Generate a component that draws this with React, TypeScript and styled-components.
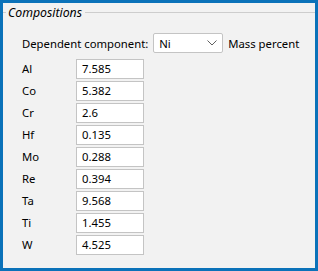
import React from 'react';
import styled, { createGlobalStyle } from 'styled-components';

const GlobalStyle = createGlobalStyle`
  html, body {
    margin: 0;
    padding: 0;
    background: #f2f2f2;
  }
  * {
    box-sizing: border-box;
  }
`;

const Window = styled.div`
  width: 318px;
  height: 271px;
  border: 3px solid #0b72b9;
  background: #f2f2f2;
  font-family: 'Noto Sans', 'Open Sans', sans-serif;
  font-size: 11.3px;
  color: #000;
  overflow: hidden;
`;

const GroupHeader = styled.div`
  display: flex;
  align-items: center;
  height: 19px;
`;

const Rule = styled.div<{ grow?: boolean; width?: number }>`
  height: 1px;
  background: #cdcdcd;
  flex: ${(p) => (p.grow ? '1' : `0 0 ${p.width}px`)};
`;

const Legend = styled.span`
  font-style: italic;
  font-size: 12.3px;
  padding: 0 3px 0 2px;
  line-height: 19px;
`;

const Body = styled.div`
  padding: 11px 0 0 19px;
  display: flex;
  flex-direction: column;
`;

const DependentRow = styled.div`
  display: flex;
  align-items: center;
  height: 20px;
  margin-bottom: 6px;
`;

const Combo = styled.div`
  width: 70px;
  height: 20px;
  margin: 0 5px 0 5px;
  border: 1px solid #c4c4c4;
  border-radius: 2px;
  background: #fff;
  display: flex;
  align-items: center;
  justify-content: space-between;
  padding: 0 5px 0 5px;
`;

const Rows = styled.div`
  display: grid;
  grid-template-columns: 54px 68px;
  row-gap: 2px;
  align-items: center;
`;

const Label = styled.span`
  line-height: 20px;
`;

const Field = styled.div`
  height: 20px;
  border: 1px solid #c4c4c4;
  background: #fff;
  padding-left: 5px;
  line-height: 18px;
`;

const Chevron = () => (
  <svg width="10" height="6" viewBox="0 0 10 6">
    <path d="M0.5 0.5 L5 5 L9.5 0.5" fill="none" stroke="#606060" strokeWidth="1" />
  </svg>
);

const composition: [string, string][] = [
  ['Al', '7.585'],
  ['Co', '5.382'],
  ['Cr', '2.6'],
  ['Hf', '0.135'],
  ['Mo', '0.288'],
  ['Re', '0.394'],
  ['Ta', '9.568'],
  ['Ti', '1.455'],
  ['W', '4.525'],
];

const App = () => (
  <Window>
    <GlobalStyle />
    <GroupHeader>
      <Rule width={3} />
      <Legend>Compositions</Legend>
      <Rule grow />
    </GroupHeader>
    <Body>
      <DependentRow>
        <span>Dependent component:</span>
        <Combo>
          <span>Ni</span>
          <Chevron />
        </Combo>
        <span>Mass percent</span>
      </DependentRow>
      <Rows>
        {composition.map(([el, val]) => (
          <React.Fragment key={el}>
            <Label>{el}</Label>
            <Field>{val}</Field>
          </React.Fragment>
        ))}
      </Rows>
    </Body>
  </Window>
);

export default App;
